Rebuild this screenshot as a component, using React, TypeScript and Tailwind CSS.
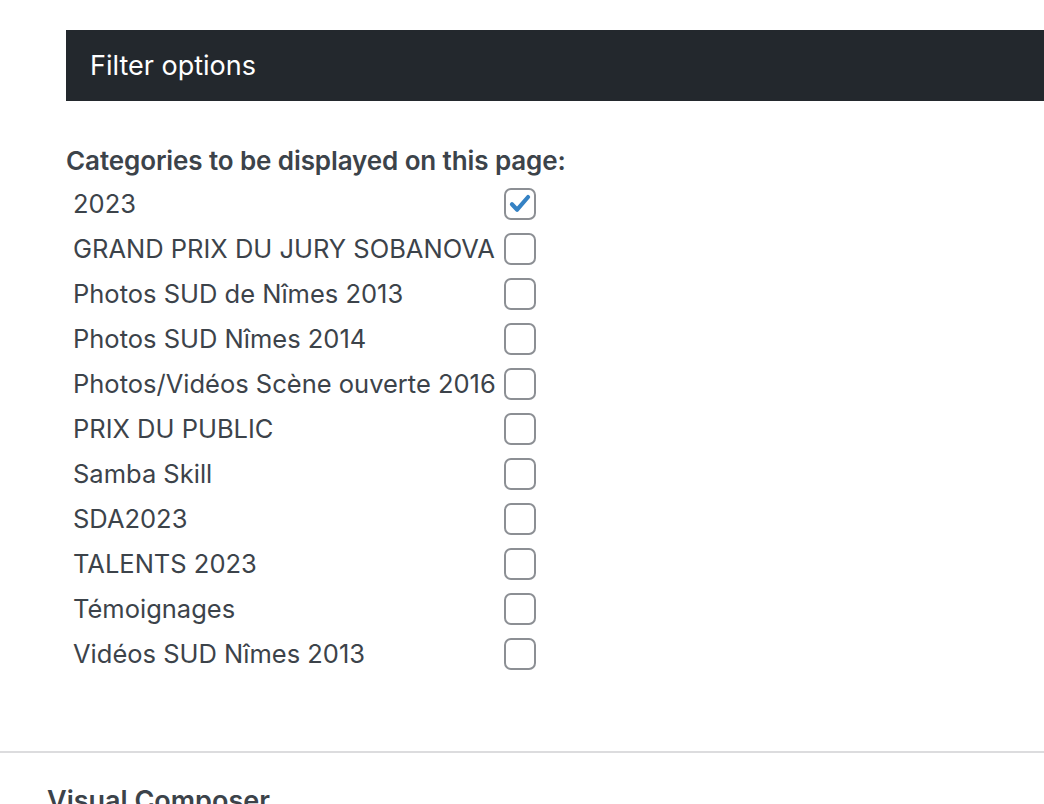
const categories = [
  { name: "2023", checked: true },
  { name: "GRAND PRIX DU JURY SOBANOVA", checked: false },
  { name: "Photos SUD de Nîmes 2013", checked: false },
  { name: "Photos SUD Nîmes 2014", checked: false },
  { name: "Photos/Vidéos Scène ouverte 2016", checked: false },
  { name: "PRIX DU PUBLIC", checked: false },
  { name: "Samba Skill", checked: false },
  { name: "SDA2023", checked: false },
  { name: "TALENTS 2023", checked: false },
  { name: "Témoignages", checked: false },
  { name: "Vidéos SUD Nîmes 2013", checked: false },
];

const Checkbox = ({ checked }: { checked: boolean }) => (
  <span className="flex h-[32px] w-[32px] items-center justify-center rounded-[7px] border-2 border-[#8c8f94] bg-white">
    {checked && (
      <svg width="26" height="26" viewBox="0 0 20 20">
        <path d="M3.8 10.2 L7.8 14.4 L16.2 4.6" fill="none" stroke="#3582c4" strokeWidth="3.2" strokeLinecap="round" strokeLinejoin="round" />
      </svg>
    )}
  </span>
);

export default function App() {
  return (
    <div className="h-[804px] w-[1044px] overflow-hidden bg-white text-[#3c434a]" style={{ fontFamily: "Inter, 'Noto Sans', sans-serif" }}>
      <div className="ml-[66px] mt-[30px] flex h-[71px] items-center bg-[#23282d] pl-[24px]">
        <h2 className="text-[27px] font-normal leading-[36px] text-white">Filter options</h2>
      </div>

      <div className="ml-[66px] mt-[45px]">
        <p className="text-[26px] font-semibold leading-[30px] tracking-[-0.1px]">Categories to be displayed on this page:</p>
        <div className="mt-[5px] grid w-fit grid-cols-[auto_auto] items-center">
          {categories.map((c) => (
            <div key={c.name} className="contents">
              <span className="h-[45px] pl-[7px] pr-[8px] text-[25.5px] leading-[45px]">{c.name}</span>
              <Checkbox checked={c.checked} />
            </div>
          ))}
        </div>
      </div>

      <div className="mt-[75px] border-t-2 border-[#dcdcde]" />
      <div className="ml-[47px] mt-[30px] text-[27px] font-semibold leading-[36px]">Visual Composer</div>
    </div>
  );
}
